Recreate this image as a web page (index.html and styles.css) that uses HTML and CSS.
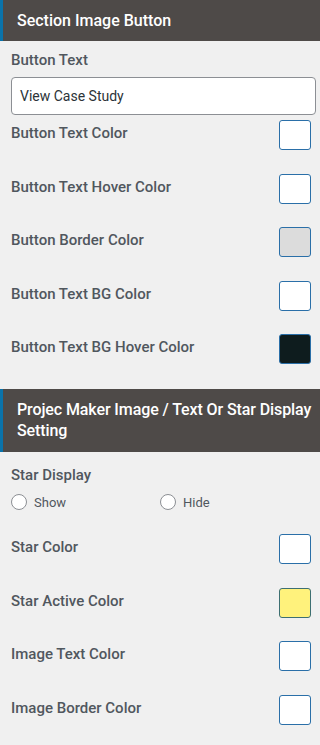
FILE: index.html
```html
<!DOCTYPE html>
<html>
<head>
<meta charset="utf-8">
<link rel="stylesheet" href="styles.css">
</head>
<body>
<div class="panel">
  <div class="section-head">Section Image Button</div>
  <div class="section-body first">
    <div class="field-label">Button Text</div>
    <div class="text-input">View Case Study</div>
    <div class="rows">
      <div class="row"><span class="row-label">Button Text Color</span><span class="swatch white"></span></div>
      <div class="row"><span class="row-label">Button Text Hover Color</span><span class="swatch white"></span></div>
      <div class="row"><span class="row-label">Button Border Color</span><span class="swatch grey"></span></div>
      <div class="row"><span class="row-label">Button Text BG Color</span><span class="swatch white"></span></div>
      <div class="row"><span class="row-label">Button Text BG Hover Color</span><span class="swatch dark"></span></div>
    </div>
  </div>
  <div class="section-head tall">Projec Maker Image / Text Or Star Display Setting</div>
  <div class="section-body second">
    <div class="field-label">Star Display</div>
    <div class="radios">
      <label class="radio"><span class="circle"></span>Show</label>
      <label class="radio"><span class="circle"></span>Hide</label>
    </div>
    <div class="rows">
      <div class="row"><span class="row-label">Star Color</span><span class="swatch white"></span></div>
      <div class="row"><span class="row-label">Star Active Color</span><span class="swatch yellow"></span></div>
      <div class="row"><span class="row-label">Image Text Color</span><span class="swatch white"></span></div>
      <div class="row"><span class="row-label">Image Border Color</span><span class="swatch white"></span></div>
    </div>
  </div>
</div>
</body>
</html>
```
FILE: styles.css
```css
html, body {
  margin: 0;
  padding: 0;
  background: #f0f0f0;
}
body {
  font-family: Roboto, "Liberation Sans", sans-serif;
  width: 320px;
  height: 745px;
  overflow: hidden;
}
.section-head {
  background: #4e4a48;
  color: #ffffff;
  font-size: 16px;
  font-weight: 500;
  line-height: 21px;
  padding: 10px 0 10px 14px;
  border-left: 3px solid #0a73aa;
}
.section-head.tall {
  padding-bottom: 11px;
  letter-spacing: -0.1px;
}
.section-body {
  padding: 9px 4px 0 11px;
}
.section-body.second {
  padding-top: 13px;
}
.field-label {
  font-size: 15px;
  font-weight: 500;
  line-height: 20px;
  color: #50575e;
}
.text-input {
  margin-top: 7px;
  height: 36px;
  box-sizing: content-box;
  border: 1px solid #8c8f94;
  border-radius: 4px;
  background: #ffffff;
  padding: 0 8px;
  font-size: 14px;
  line-height: 36px;
  color: #2c3338;
}
.rows {
  display: flex;
  flex-direction: column;
  gap: 23.5px;
  margin-right: 5px;
  margin-top: 5px;
  padding-bottom: 25px;
}
.second .rows {
  margin-top: 24px;
}
.row {
  display: flex;
  justify-content: space-between;
  align-items: flex-start;
  height: 30px;
}
.row-label {
  font-size: 15px;
  font-weight: 500;
  line-height: 20px;
  color: #50575e;
  padding-top: 3px;
}
.swatch {
  width: 30px;
  height: 28px;
  border: 1px solid #2a6fa8;
  border-radius: 3px;
}
.swatch.white { background: #ffffff; }
.swatch.grey { background: #dcdcdc; }
.swatch.dark { background: #0e1c1e; }
.swatch.yellow { background: #fff27c; border-color: #3d6f72; }
.radios {
  display: grid;
  grid-template-columns: 149px 149px;
  margin-top: 9px;
}
.radio {
  display: flex;
  align-items: center;
  height: 16px;
  font-size: 13px;
  color: #50575e;
}
.circle {
  width: 14px;
  height: 14px;
  border: 1px solid #8c8f94;
  border-radius: 50%;
  background: #ffffff;
  margin-right: 7px;
}
```
